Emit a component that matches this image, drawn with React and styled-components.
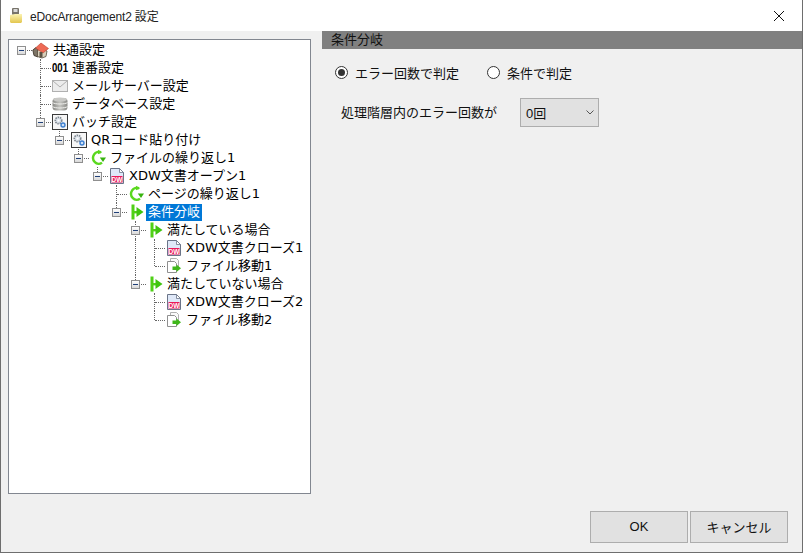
import React from "react";
import styled, { createGlobalStyle } from "styled-components";

const GlobalStyle = createGlobalStyle`
	html, body {
		margin: 0;
		padding: 0;
	}
	body {
		font-family: "Liberation Sans", "Noto Sans CJK JP", sans-serif;
		color: #000;
	}
`;

const Win = styled.div`
	width: 803px;
	height: 553px;
	box-sizing: border-box;
	display: flex;
	flex-direction: column;
	background: #f0f0f0;
	border: 1px solid #6e6e6e;
	border-top: none;
`;

const TitleBar = styled.div`
	height: 31px;
	flex: none;
	display: flex;
	align-items: center;
	background: #fff;
	padding: 0 0 0 8px;
	font-size: 12px;
	.title {
		margin-left: 7px;
		padding-bottom: 1px;
		letter-spacing: -0.15px;
		color: #222;
	}
`;

const CloseBtn = styled.div`
	margin-left: auto;
	width: 46px;
	height: 31px;
	display: flex;
	align-items: center;
	justify-content: center;
`;

const Body = styled.div`
	flex: 1;
	display: flex;
	min-height: 0;
`;

const TreePanel = styled.div`
	width: 303px;
	height: 455px;
	box-sizing: border-box;
	margin: 8px 0 0 7px;
	flex: none;
	background: #fff;
	border: 1px solid #828790;
	padding: 1px 0 0 3px;
`;

const Row = styled.div`
	display: flex;
	height: 18px;
	align-items: center;
`;

const Cell = styled.div`
	position: relative;
	width: 19px;
	height: 18px;
	flex: none;
	display: flex;
	align-items: center;
	justify-content: center;
	${(p) =>
		p.$up &&
		`&::before {
		content: "";
		position: absolute;
		left: 9px;
		top: 0;
		height: ${p.$down ? 18 : 9}px;
		border-left: 1px dotted #666;
	}`}
	${(p) =>
		p.$right &&
		`&::after {
		content: "";
		position: absolute;
		left: 10px;
		top: 9px;
		width: 10px;
		border-top: 1px dotted #666;
	}`}
`;

const Expander = styled.div`
	position: relative;
	z-index: 1;
	width: 9px;
	height: 9px;
	box-sizing: border-box;
	background: linear-gradient(#fff, #d8d8d8);
	border: 1px solid #8f8f8f;
	&::after {
		content: "";
		position: absolute;
		left: 1px;
		top: 3px;
		width: 5px;
		height: 1px;
		background: #1f3f78;
	}
`;

const IconBox = styled.div`
	position: relative;
	z-index: 1;
	width: 19px;
	height: 18px;
	flex: none;
	display: flex;
	align-items: center;
	justify-content: center;
`;

const Label = styled.span`
	margin-left: 1px;
	padding: 0 2px;
	height: 17px;
	line-height: 15px;
	font-family: "DejaVu Sans", "Noto Sans CJK JP", sans-serif;
	font-size: 13px;
	white-space: nowrap;
	background: ${(p) => (p.$selected ? "#0078d7" : "transparent")};
	color: ${(p) => (p.$selected ? "#fff" : "#000")};
`;

const SerialMark = styled.span`
	display: block;
	width: 20px;
	flex: none;
	font-size: 12px;
	font-weight: 700;
	line-height: 16px;
	text-align: center;
	transform: scaleX(0.8);
`;

const RightPane = styled.div`
	flex: 1;
	margin-left: 11px;
	display: flex;
	flex-direction: column;
	min-width: 0;
`;

const Header = styled.div`
	height: 18px;
	background: #808080;
	font-size: 13px;
	line-height: 18px;
	padding-left: 9px;
	color: #111;
`;

const Options = styled.div`
	display: flex;
	align-items: center;
	margin: 14px 0 0 13px;
	gap: 28px;
`;

const RadioLabel = styled.label`
	display: flex;
	align-items: center;
	font-size: 13px;
	gap: 7px;
	color: #111;
`;

const RadioDot = styled.span`
	width: 13px;
	height: 13px;
	box-sizing: border-box;
	border-radius: 50%;
	border: 1px solid #333;
	background: #fff;
	display: flex;
	align-items: center;
	justify-content: center;
	&::after {
		content: "";
		display: ${(p) => (p.$on ? "block" : "none")};
		width: 7px;
		height: 7px;
		border-radius: 50%;
		background: #333;
	}
`;

const FieldRow = styled.div`
	display: flex;
	align-items: center;
	margin: 16px 0 0 19px;
	font-size: 13px;
	color: #111;
	gap: 23px;
	.caption {
		margin-bottom: 2px;
	}
`;

const Select = styled.div`
	width: 79px;
	height: 29px;
	box-sizing: border-box;
	background: #e1e1e1;
	border: 1px solid #adadad;
	display: flex;
	align-items: center;
	justify-content: space-between;
	padding: 0 4px 0 5px;
	font-size: 13px;
`;

const Footer = styled.div`
	display: flex;
	justify-content: flex-end;
	gap: 2px;
	margin-top: auto;
	padding: 0 14px 9px 0;
`;

const Button = styled.div`
	width: 98px;
	height: 32px;
	box-sizing: border-box;
	background: #e1e1e1;
	border: 1px solid #adadad;
	display: flex;
	align-items: center;
	justify-content: center;
	font-size: 13px;
	color: #111;
	padding-bottom: 2px;
`;

const Folder = () => (
	<svg width="14" height="16" viewBox="0 0 14 16">
		<defs>
			<linearGradient id="fold" x1="0" y1="0" x2="0" y2="1">
				<stop offset="0" stopColor="#fbf3b4" />
				<stop offset="1" stopColor="#e3c64e" />
			</linearGradient>
		</defs>
		<rect x="3" y="0" width="7" height="7" rx="1" fill="#77736a" />
		<rect x="4.500" y="1" width="4" height="3" fill="#d8d8d8" />
		<path d="M1 7l5-1 7 0v8l-1 1H2l-1-1z" fill="url(#fold)" />
	</svg>
);

const House = () => (
	<svg width="17" height="17" viewBox="0 0 17 17">
		<path d="M0.800 8L4 5.500 6 7v8L2 13.500z" fill="#7d7466" stroke="#3f382e" strokeWidth="0.9" />
		<path d="M5.500 8l5.500-0.500 4 1.500-1 5.500-4 1.500-4.500-1.500z" fill="#d8cfba" stroke="#554c3c" strokeWidth="0.8" />
		<path d="M3.500 6L9 1l7.500 5.500-5.500 4.500z" fill="#ee6a55" stroke="#b8412f" strokeWidth="0.6" />
		<rect x="7.500" y="10" width="3" height="5.500" fill="#5b5244" />
	</svg>
);

const Serial = () => <SerialMark>001</SerialMark>;

const Mail = () => (
	<svg width="16" height="12" viewBox="0 0 16 12">
		<rect x="0.500" y="0.500" width="15" height="11" fill="#ececec" stroke="#b0b0b0" />
		<path d="M1 1l7 6 7-6" fill="none" stroke="#b0b0b0" />
	</svg>
);

const Database = () => (
	<svg width="16" height="14" viewBox="0 0 16 14">
		<defs>
			<linearGradient id="db" x1="0" y1="0" x2="1" y2="0">
				<stop offset="0" stopColor="#8a8a86" />
				<stop offset="0.500" stopColor="#c4c4c0" />
				<stop offset="1" stopColor="#8a8a86" />
			</linearGradient>
		</defs>
		<rect x="0.500" y="1" width="15" height="12.500" rx="3.500" fill="url(#db)" />
		<ellipse cx="8" cy="2.500" rx="7" ry="2" fill="#c9c9c6" />
		<path d="M0.500 5.500c2 2 13 2 15 0M0.500 9.500c2 2 13 2 15 0" fill="none" stroke="#efefec" />
	</svg>
);

const Gears = () => (
	<svg width="16" height="16" viewBox="0 0 16 16">
		<rect x="0.500" y="0.500" width="15" height="15" fill="#f6f6f6" stroke="#3a3a3a" />
		<circle cx="6.500" cy="6.500" r="3.200" fill="#dfe6ee" stroke="#7f8790" strokeWidth="1.700" strokeDasharray="1.500 0.800" />
		<circle cx="6.500" cy="6.500" r="1" fill="#fff" />
		<circle cx="11" cy="11" r="2" fill="#cfe0f5" stroke="#3d7fd0" strokeWidth="1.400" />
	</svg>
);

const Loop = () => (
	<svg width="16" height="18" viewBox="0 0 16 18">
		<path d="M11 3.400A5.500 6 0 1 0 12 13.600" fill="none" stroke="#5ad81e" strokeWidth="2.400" />
		<path d="M9.800 8.500H16l-3 4.500z" fill="#38b30e" />
		<path d="M8 0.800l4 2.700-4 1.700z" fill="#5ad81e" />
	</svg>
);

const Branch = () => (
	<svg width="16" height="16" viewBox="0 0 16 16">
		<rect x="3.500" y="0.500" width="3" height="15" fill="#4fd016" />
		<rect x="6" y="7" width="3" height="2.400" fill="#4fd016" />
		<path d="M8.500 3l7 5-7 5z" fill="#3fc40f" />
	</svg>
);

const XdwDoc = () => (
	<svg width="14" height="16" viewBox="0 0 14 16">
		<path d="M0.500 0.500h9l4 4v11h-13z" fill="#dfe8f8" stroke="#6a7488" />
		<path d="M9.500 0.500v4h4z" fill="#fff" stroke="#6a7488" strokeWidth="0.800" />
		<rect x="1.500" y="8" width="11" height="6.500" fill="#ea1a5a" />
		<text
			x="7"
			y="13.500"
			fontSize="6.500"
			fontWeight="700"
			textAnchor="middle"
			fill="#fff"
			fontFamily="Liberation Sans, sans-serif"
		>
			DW
		</text>
	</svg>
);

const FileMove = () => (
	<svg width="16" height="16" viewBox="0 0 16 16">
		<path d="M4.500 0.500h6l2 2v9h-8z" fill="#fafafa" stroke="#b0b0b0" />
		<path d="M1.500 3.500h7l2 2v9h-9z" fill="#fff" stroke="#8f8f8f" />
		<path d="M6.500 8.500h4v-2l4.500 3.800-4.500 3.700v-2h-4z" fill="#3fb71a" />
	</svg>
);

// guides: 左から順に "" 空, "|" 縦線, "T" 分岐, "L" 終端
const rows = [
	{ guides: [], open: true, Icon: House, text: "共通設定" },
	{ guides: ["", "T"], Icon: Serial, text: "連番設定" },
	{ guides: ["", "T"], Icon: Mail, text: "メールサーバー設定" },
	{ guides: ["", "T"], Icon: Database, text: "データベース設定" },
	{ guides: ["", "L"], open: true, Icon: Gears, text: "バッチ設定" },
	{ guides: ["", "", "L"], open: true, Icon: Gears, text: "QRコード貼り付け" },
	{ guides: ["", "", "", "L"], open: true, Icon: Loop, text: "ファイルの繰り返し1" },
	{ guides: ["", "", "", "", "L"], open: true, Icon: XdwDoc, text: "XDW文書オープン1" },
	{ guides: ["", "", "", "", "", "T"], Icon: Loop, text: "ページの繰り返し1" },
	{ guides: ["", "", "", "", "", "L"], open: true, Icon: Branch, text: "条件分岐", selected: true },
	{ guides: ["", "", "", "", "", "", "T"], open: true, Icon: Branch, text: "満たしている場合" },
	{ guides: ["", "", "", "", "", "", "|", "T"], Icon: XdwDoc, text: "XDW文書クローズ1" },
	{ guides: ["", "", "", "", "", "", "|", "L"], Icon: FileMove, text: "ファイル移動1" },
	{ guides: ["", "", "", "", "", "", "L"], open: true, Icon: Branch, text: "満たしていない場合" },
	{ guides: ["", "", "", "", "", "", "", "T"], Icon: XdwDoc, text: "XDW文書クローズ2" },
	{ guides: ["", "", "", "", "", "", "", "L"], Icon: FileMove, text: "ファイル移動2" },
];

const TreeRow = ({ row }) => {
	const Icon = row.Icon;
	const guides = row.guides.length ? row.guides : [""];
	return (
		<Row>
			{guides.map((g, i) => {
				const last = i === guides.length - 1;
				return (
					<Cell
						key={i}
						$up={g !== ""}
						$down={g === "T" || g === "|"}
						$right={g === "T" || g === "L" || (last && row.open)}
					>
						{last && row.open && <Expander />}
					</Cell>
				);
			})}
			<IconBox>
				<Icon />
			</IconBox>
			<Label $selected={row.selected}>{row.text}</Label>
		</Row>
	);
};

const App = () => {
	return (
		<>
			<GlobalStyle />
			<Win>
				<TitleBar>
					<Folder />
					<span className="title">eDocArrangement2 設定</span>
					<CloseBtn>
						<svg width="12" height="12" viewBox="0 0 12 12">
							<path d="M1 1l10 10M11 1L1 11" stroke="#111" strokeWidth="1" />
						</svg>
					</CloseBtn>
				</TitleBar>
				<Body>
					<TreePanel>
						{rows.map((row, i) => (
							<TreeRow key={i} row={row} />
						))}
					</TreePanel>
					<RightPane>
						<Header>条件分岐</Header>
						<Options>
							<RadioLabel>
								<RadioDot $on />
								エラー回数で判定
							</RadioLabel>
							<RadioLabel>
								<RadioDot />
								条件で判定
							</RadioLabel>
						</Options>
						<FieldRow>
							<span className="caption">処理階層内のエラー回数が</span>
							<Select>
								<span>0回</span>
								<svg width="8" height="5" viewBox="0 0 8 5">
									<path d="M0.500 0.500L4 4l3.500-3.500" fill="none" stroke="#555" />
								</svg>
							</Select>
						</FieldRow>
						<Footer>
							<Button>OK</Button>
							<Button>キャンセル</Button>
						</Footer>
					</RightPane>
				</Body>
			</Win>
		</>
	);
};

export default App;
